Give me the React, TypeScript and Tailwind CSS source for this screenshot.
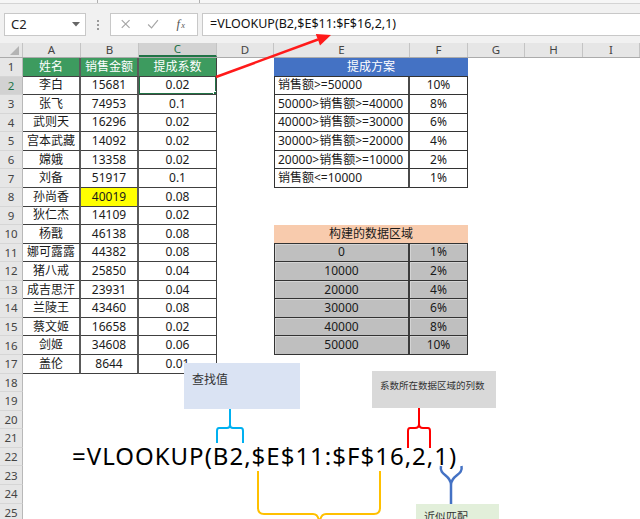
import React from "react";

const names = ["李白","张飞","武则天","宫本武藏","嫦娥","刘备","孙尚香","狄仁杰","杨戬","娜可露露","猪八戒","成吉思汗","兰陵王","蔡文姬","剑姬","盖伦"];
const amounts = [15681,74953,16296,14092,13358,51917,40019,14109,46138,44382,25850,23931,43460,16658,34608,8644];
const coefs = ["0.02","0.1","0.02","0.02","0.02","0.1","0.08","0.02","0.08","0.08","0.04","0.04","0.08","0.02","0.06","0.01"];
const plan = [["销售额>=50000","10%"],["50000>销售额>=40000","8%"],["40000>销售额>=30000","6%"],["30000>销售额>=20000","4%"],["20000>销售额>=10000","2%"],["销售额<=10000","1%"]];
const range = [["0","1%"],["10000","2%"],["20000","4%"],["30000","6%"],["40000","8%"],["50000","10%"]];

const cellBase = "flex items-center justify-center overflow-hidden whitespace-nowrap text-[12px] text-[#1a1a1a]";

function SheetRow({ r }: { r: number }) {
  const cells: React.ReactNode[] = [];
  const sel = r === 2;
  cells.push(
    <div key="h" className={`flex items-center justify-center border-r border-r-[#b8b8b8] border-b border-b-[#d6d6d6] text-[11.5px] ${sel ? "bg-[#d2d2d2] text-[#217346]" : "bg-[#e6e6e6] text-[#444]"}`}>{r}</div>
  );
  // A B C
  if (r === 1) {
    cells.push(<div key="a" className={`${cellBase} bg-[#3d9b5f] text-white border-b border-b-[#404040] border-r-2 border-r-[#5a5a5a]`}>姓名</div>);
    cells.push(<div key="b" className={`${cellBase} bg-[#3d9b5f] text-white border-b border-b-[#404040] border-r-2 border-r-[#5a5a5a]`}>销售金额</div>);
    cells.push(<div key="c" className={`${cellBase} bg-[#3d9b5f] text-white border-b border-b-[#404040] border-r border-r-[#404040]`}>提成系数</div>);
  } else if (r <= 17) {
    const i = r - 2;
    cells.push(<div key="a" className={`${cellBase} border-b border-b-[#404040] border-r-2 border-r-[#5a5a5a]`}>{names[i]}</div>);
    cells.push(<div key="b" className={`${cellBase} border-b border-b-[#404040] border-r-2 border-r-[#5a5a5a] ${r === 8 ? "bg-[#ffff00]" : ""}`}>{amounts[i]}</div>);
    cells.push(
      <div key="c" className={`${cellBase} relative border-b border-b-[#404040] border-r border-r-[#404040]`}>
        {coefs[i]}
        {sel && (
          <>
            <div className="absolute -left-[1px] -top-[2px] -right-[1px] -bottom-[1px] border-2 border-[#217346]" />
            <div className="absolute -right-[3px] -bottom-[3px] w-[6px] h-[6px] bg-[#217346] border border-white" />
          </>
        )}
      </div>
    );
  } else {
    cells.push(<div key="a" />, <div key="b" />, <div key="c" />);
  }
  // D
  cells.push(<div key="d" />);
  // E F
  if (r === 1) {
    cells.push(<div key="ef" className={`${cellBase} col-span-2 bg-[#4472c4] text-white text-[12.5px] border-b border-b-[#333]`}>提成方案</div>);
  } else if (r >= 2 && r <= 7) {
    const p = plan[r - 2];
    cells.push(<div key="e" className={`${cellBase} justify-start pl-[3px] border-l border-l-[#333] border-b border-b-[#333] border-r-2 border-r-[#4a4a4a]`}>{p[0]}</div>);
    cells.push(<div key="f" className={`${cellBase} border-b border-b-[#333] border-r border-r-[#333]`}>{p[1]}</div>);
  } else if (r === 10) {
    cells.push(<div key="ef" className={`${cellBase} col-span-2 bg-[#f8cbad] text-[12.5px] border-b border-b-[#333]`}>构建的数据区域</div>);
  } else if (r >= 11 && r <= 16) {
    const p = range[r - 11];
    cells.push(<div key="e" className={`${cellBase} bg-[#bfbfbf] shadow-[inset_1px_1px_0_#d4d4d4] border-l border-l-[#333] border-b border-b-[#333] border-r-2 border-r-[#3a3a3a]`}>{p[0]}</div>);
    cells.push(<div key="f" className={`${cellBase} bg-[#bfbfbf] shadow-[inset_1px_1px_0_#d4d4d4] border-b border-b-[#333] border-r border-r-[#333]`}>{p[1]}</div>);
  } else {
    cells.push(<div key="e" />, <div key="f" />);
  }
  cells.push(<div key="g" />, <div key="hh" />, <div key="i" />);
  return <>{cells}</>;
}

export default function App() {
  const rows = Array.from({ length: 25 }, (_, i) => i + 1);
  const colHeads = ["A", "B", "C", "D", "E", "F", "G", "H", "I"];
  return (
    <div className="relative w-[640px] h-[519px] overflow-hidden bg-white font-['Noto_Sans','Noto_Sans_CJK_SC',sans-serif]">
      {/* ribbon bottom strip */}
      <div className="relative h-[4px] bg-[#f6f6f6] border-b border-b-[#d4d4d4]">
        <div className="absolute left-[97px] top-0 w-[1px] h-[3px] bg-[#b0b0b0]" />
        <div className="absolute left-[199px] top-0 w-[1px] h-[3px] bg-[#b0b0b0]" />
      </div>
      {/* formula bar */}
      <div className="flex items-center h-[39px] bg-[#f1f1f1] pt-[2px]">
        <div className="ml-[4px] w-[82px] h-[23px] bg-white border border-[#c8c8c8] flex items-center justify-between pl-[6px] pr-[5px]">
          <span className="text-[13px] text-[#222]">C2</span>
          <svg width="8" height="5" viewBox="0 0 8 5"><path d="M0 0 H8 L4 4.5 Z" fill="#666" /></svg>
        </div>
        <div className="ml-[11px] flex flex-col gap-[2px]">
          <div className="w-[2px] h-[2px] bg-[#9a9a9a]" />
          <div className="w-[2px] h-[2px] bg-[#9a9a9a]" />
          <div className="w-[2px] h-[2px] bg-[#9a9a9a]" />
        </div>
        <div className="ml-[11px] w-[88px] h-[23px] bg-white border border-[#c8c8c8] flex items-center">
          <svg width="88" height="23" viewBox="0 0 88 23">
            <path d="M11 7 L19 15 M19 7 L11 15" stroke="#a6a6a6" strokeWidth="1.2" fill="none" />
            <path d="M38 11.5 L41.5 15 L48 7" stroke="#a6a6a6" strokeWidth="1.2" fill="none" />
            <text x="67" y="15.5" fontFamily="'Liberation Serif', serif" fontStyle="italic" fontSize="13" fill="#555">f</text>
            <text x="72" y="15.5" fontFamily="'Liberation Serif', serif" fontStyle="italic" fontSize="8.5" fill="#555">x</text>
          </svg>
        </div>
        <div className="ml-[4px] flex-1 h-[23px] bg-white border border-[#c8c8c8] border-r-0 flex items-center pl-[7px]">
          <span className="text-[12.5px] text-[#111]">=VLOOKUP(B2,$E$11:$F$16,2,1)</span>
        </div>
      </div>
      {/* column headers */}
      <div className="grid grid-cols-[23px_58px_58px_78px_57px_136px_58px_57px_58px_57px] h-[15px] bg-[#e6e6e6] border-b border-b-[#ababab]">
        <div className="relative border-r border-r-[#c4c4c4]">
          <svg className="absolute right-[3px] bottom-[2px]" width="9" height="9" viewBox="0 0 9 9"><path d="M9 0 V9 H0 Z" fill="#b4b4b4" /></svg>
        </div>
        {colHeads.map((c) => (
          <div
            key={c}
            className={`flex items-center justify-center text-[11.5px] leading-none border-r border-r-[#c4c4c4] ${c === "C" ? "bg-[#d2d2d2] text-[#217346] border-b-2 border-b-[#217346]" : "text-[#444]"}`}
          >
            {c}
          </div>
        ))}
      </div>
      {/* sheet body */}
      <div className="grid grid-cols-[23px_58px_58px_78px_57px_136px_58px_57px_58px_57px] auto-rows-[18.57px]">
        {rows.map((r) => (
          <SheetRow key={r} r={r} />
        ))}
      </div>

      {/* annotation boxes */}
      <div className="absolute left-[184px] top-[363px] w-[116px] h-[46px] bg-[#dae3f3] pl-[8px] pt-[9px] text-[12px] leading-[16px] text-[#333]">查找值</div>
      <div className="absolute left-[372px] top-[371px] w-[124px] h-[37px] bg-[#d9d9d9] pl-[8px] pt-[8px] text-[9.5px] leading-[13px] text-[#333]">系数所在数据区域的列数</div>
      <div className="absolute left-[416px] top-[504px] w-[83px] h-[20px] bg-[#e2efda] pl-[8px] pt-[6px] text-[11px] leading-[14px] text-[#333]">近似匹配</div>

      {/* big formula */}
      <div className="absolute left-[72px] top-[443px] text-[24px] leading-[26px] tracking-[1px] text-black whitespace-nowrap">=VLOOKUP(B2,$E$11:$F$16,2,1)</div>

      {/* drawings */}
      <svg className="absolute left-0 top-0 pointer-events-none" width="640" height="519" viewBox="0 0 640 519">
        <path d="M216 77 L318 39.5" stroke="#ff1a1a" strokeWidth="2.5" fill="none" />
        <path d="M331 35 L315.8 34 L320 45.6 Z" fill="#ff1a1a" />
        <path d="M230 409 V425 Q230 428 227 428 H219 Q217 428 217 431 V443 M230 425 Q230 428 233 428 H241 Q243 428 243 431 V443" stroke="#00b0f0" strokeWidth="2" fill="none" />
        <path d="M419 408 V424 Q419 428 415 428 H410 Q408 428 408 431 V448 M419 424 Q419 428 423 428 H428 Q430 428 430 431 V448" stroke="#ff0000" strokeWidth="2" fill="none" />
        <path d="M441 466 C439 476 451 474 451 485 M461.5 466 C463.5 476 451 474 451 485 V504" stroke="#4472c4" strokeWidth="2.5" fill="none" />
        <path d="M258 471 V508 Q258 514 264 514 H313 Q318 514 319 521 M320 521 Q321 514 326 514 H374 Q380 514 380 508 V471" stroke="#ffc000" strokeWidth="2" fill="none" />
      </svg>
    </div>
  );
}
